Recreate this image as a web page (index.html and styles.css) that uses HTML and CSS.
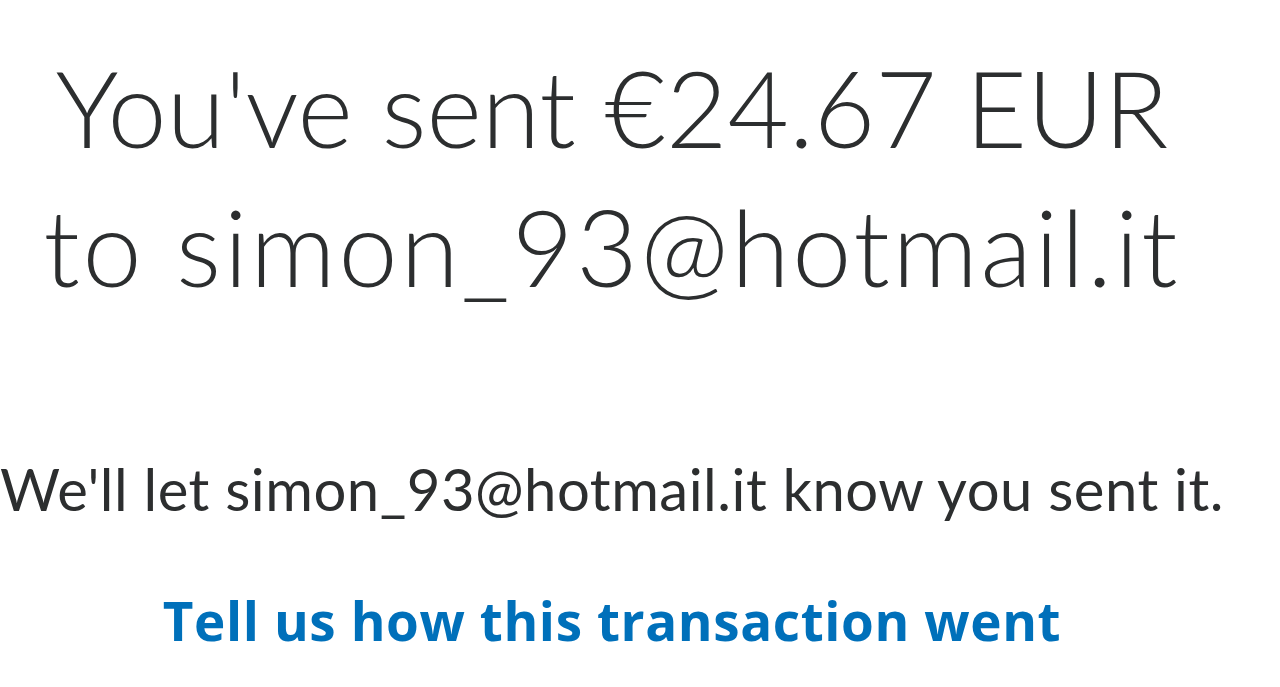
FILE: index.html
```html
<!DOCTYPE html>
<html lang="en">
<head>
    <meta charset="UTF-8">
    <title>Payment sent</title>
    <link rel="stylesheet" href="styles.css">
</head>
<body>

<div class="confirm">
    <h1 class="confirm__title">
        <span class="confirm__amount">You've sent €24.67 EUR</span>
        <span class="confirm__to">to simon_93@hotmail.it</span>
    </h1>
    <p class="confirm__note">We'll let simon_93@hotmail.it know you sent it.</p>
    <a class="confirm__link" href="#">Tell us how this transaction went</a>
</div>

</body>
</html>
```

FILE: styles.css
```css
body, html {
    margin: 0;
    padding: 0;
    height: 100%;
    overflow: hidden;
    background-color: #fff;
}
body {
    font-family: Lato, "Open Sans", sans-serif;
    font-variant-ligatures: none;
    color: #2c2e2f;
}
.confirm {
    width: 1224px;
    display: flex;
    flex-direction: column;
    align-items: center;
    padding-top: 38px;
}
.confirm__title {
    margin: 0;
    display: flex;
    flex-direction: column;
    align-items: center;
    font-size: 106px;
    font-weight: 300;
    line-height: 139px;
    white-space: nowrap;
}
.confirm__to {
    letter-spacing: 2.8px;
}
.confirm__note {
    margin: 138px 0 0 0;
    font-size: 58px;
    font-weight: 400;
    line-height: 1.2;
    letter-spacing: 0.5px;
    white-space: nowrap;
}
.confirm__link {
    margin-top: 65px;
    font-family: "Open Sans", Lato, sans-serif;
    font-size: 53px;
    font-weight: 700;
    line-height: 1.2;
    letter-spacing: 0.6px;
    color: #0070ba;
    text-decoration: none;
    white-space: nowrap;
}
```
